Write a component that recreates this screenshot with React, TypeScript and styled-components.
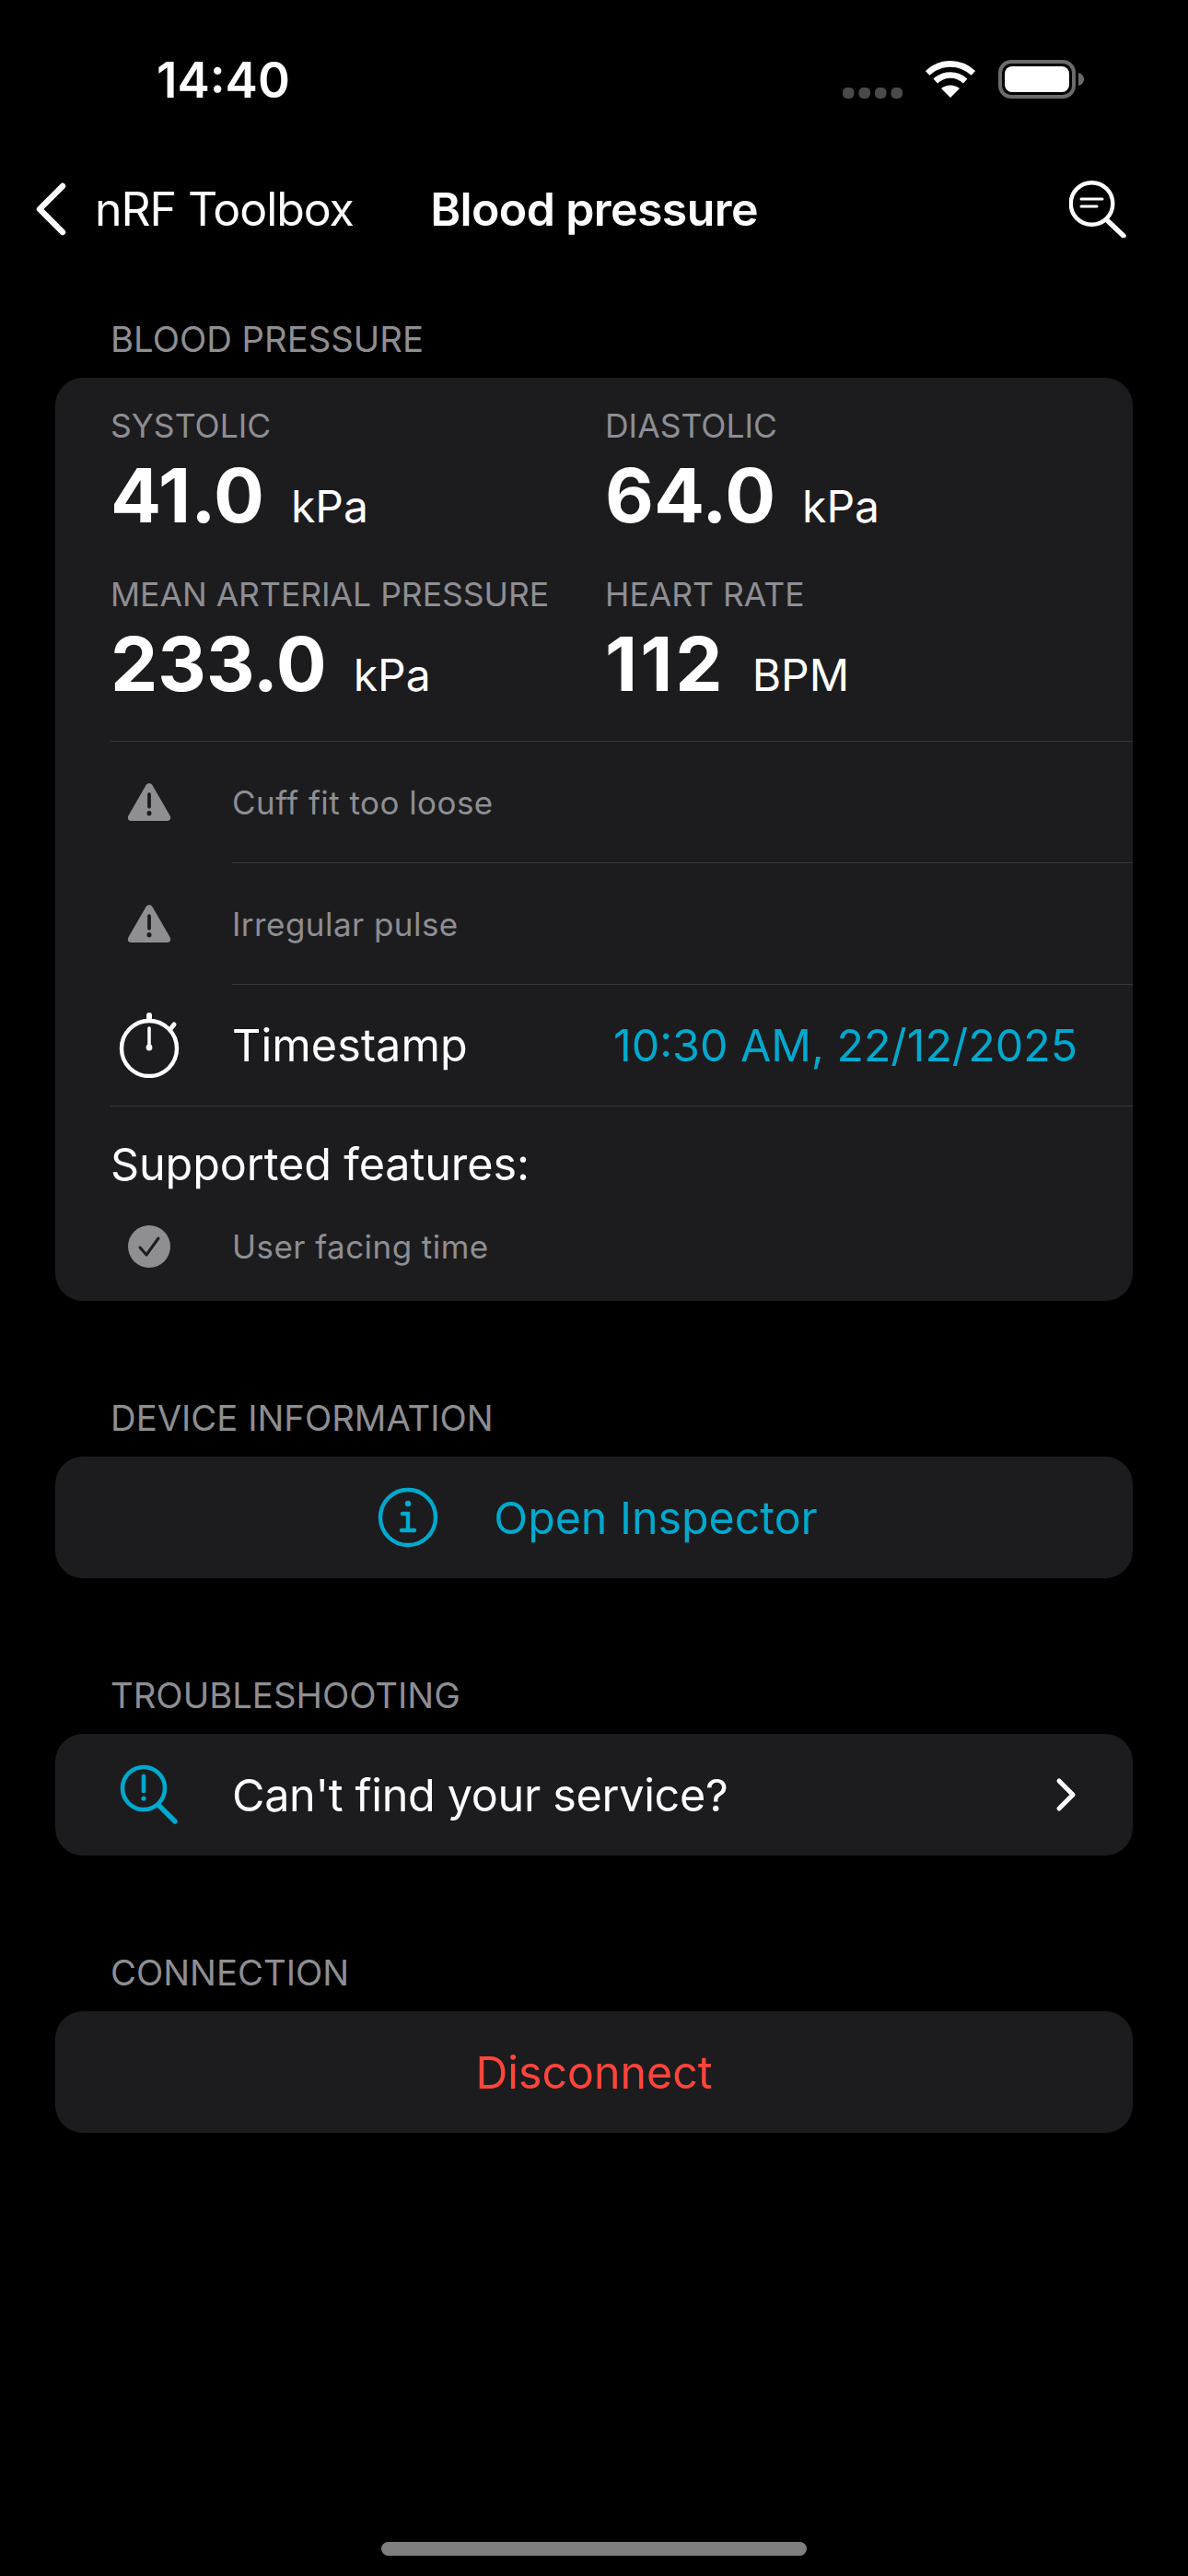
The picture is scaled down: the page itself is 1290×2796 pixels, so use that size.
import styled, { createGlobalStyle } from 'styled-components';

const blue = '#00a9ce';
const grey = '#8e8e93';
const fontStack = 'Inter, "Liberation Sans", sans-serif';

const Global = createGlobalStyle`
  html, body {
    margin: 0;
    background: #000;
  }
  * {
    box-sizing: border-box;
  }
`;

const Screen = styled.div`
  width: 1290px;
  height: 2796px;
  background: #000;
  color: #fff;
  font-family: ${fontStack};
  display: flex;
  flex-direction: column;
  overflow: hidden;
`;

const StatusBar = styled.div`
  height: 174px;
  padding: 0 113px 0 170px;
  display: flex;
  align-items: flex-start;
  justify-content: space-between;
`;

const Clock = styled.span`
  font-size: 53px;
  font-weight: 600;
  line-height: 60px;
  margin-top: 57px;
`;

const StatusIcons = styled.div`
  display: flex;
  align-items: center;
  gap: 23px;
  margin-top: 65px;
`;

const NavBar = styled.div`
  height: 106px;
  display: grid;
  grid-template-columns: 1fr auto 1fr;
  align-items: center;
`;

const BackLink = styled.div`
  display: flex;
  align-items: center;
  gap: 30px;
  padding-left: 37px;
  font-size: 50px;
  letter-spacing: -1.07px;
`;

const NavTitle = styled.div`
  font-size: 50px;
  font-weight: 600;
  letter-spacing: -0.6px;
`;

const NavAction = styled.div`
  display: flex;
  justify-content: flex-end;
  padding-right: 67px;
`;

const Content = styled.div`
  padding: 64px 60px 0;
  display: flex;
  flex-direction: column;
  gap: 103px;
`;

const SectionLabel = styled.div`
  padding-left: 60px;
  font-size: 38.3px;
  line-height: 48px;
  color: ${grey};
  margin-bottom: 18px;
`;

const Card = styled.div`
  background: #1c1c1e;
  border-radius: 30px;
  display: flow-root;
`;

const Metrics = styled.div`
  display: grid;
  grid-template-columns: 537px 1fr;
  row-gap: 27px;
  padding: 30px 0 25px 60px;
`;

const MetricLabel = styled.div`
  font-size: 35.5px;
  line-height: 46px;
  color: ${grey};
  white-space: nowrap;
`;

const MetricValue = styled.div`
  display: flex;
  align-items: baseline;
  line-height: 92px;
  margin-top: 6px;
  white-space: nowrap;
`;

const Reading = styled.span<{ $spread?: boolean }>`
  font-size: 81.5px;
  font-weight: 700;
  letter-spacing: ${(p) => (p.$spread ? 3 : 0)}px;
`;

const Unit = styled.span`
  font-size: 48px;
  margin-left: 29px;
`;

const Divider = styled.div<{ $inset?: boolean }>`
  height: 1px;
  margin-left: ${(p) => (p.$inset ? 192 : 60)}px;
  background: #38383a;
`;

const IconSlot = styled.div`
  width: 132px;
  flex: none;
  display: flex;
  justify-content: center;
  padding-right: 48px;
`;

const FlatRow = styled.div`
  height: 131px;
  padding-left: 60px;
  display: flex;
  align-items: center;
`;

const MutedText = styled.span`
  font-size: 35px;
  letter-spacing: 0.45px;
  color: ${grey};
`;

const BodyText = styled.span`
  font-size: 48.5px;
  letter-spacing: -0.3px;
`;

const RowTitle = styled(BodyText)`
  letter-spacing: 0.1px;
`;

const TimeValue = styled.span`
  margin-left: auto;
  padding-right: 60px;
  font-size: 48.3px;
  color: ${blue};
`;

const Heading = styled.div`
  padding: 33px 0 0 60px;
  font-size: 48.5px;
  letter-spacing: -0.1px;
  line-height: 60px;
`;

const FeatureRow = styled.div`
  height: 75px;
  margin: 21px 0 22px;
  padding-left: 60px;
  display: flex;
  align-items: center;
`;

const ActionCard = styled(Card)<{ $center?: boolean }>`
  height: 132px;
  display: flex;
  align-items: center;
  justify-content: ${(p) => (p.$center ? 'center' : 'flex-start')};
  padding: ${(p) => (p.$center ? '0' : '0 60px')};
  font-size: 48.3px;
`;

const InspectorCard = styled(ActionCard)`
  padding-left: 8px;
`;

const InspectorLink = styled.span`
  color: ${blue};
  margin-left: 60px;
`;

const DangerText = styled.span`
  color: #ff453a;
`;

const Chevron = styled.svg`
  margin-left: auto;
`;

const HomeBar = styled.div`
  width: 462px;
  height: 15px;
  border-radius: 8px;
  background: #7f7f7f;
  margin: auto auto 22px;
`;

function Wifi() {
  return (
    <svg width="58" height="42" viewBox="0 0 58 44" fill="none">
      <path d="M3 15 C18 1 40 1 55 15" stroke="#fff" strokeWidth="7" />
      <path d="M12 24 C22 15 36 15 46 24" stroke="#fff" strokeWidth="7" />
      <path d="M29 43 L18.5 32.5 C24.5 27.5 33.5 27.5 39.5 32.5 Z" fill="#fff" />
    </svg>
  );
}

function Battery() {
  return (
    <svg width="93" height="42" viewBox="0 0 93 42" fill="none">
      <rect x="2" y="2" width="80" height="38" rx="12" stroke="#6b6b6b" strokeWidth="4" />
      <rect x="7" y="7" width="70" height="28" rx="8" fill="#fff" />
      <path d="M87 14 C91 15 93 18 93 21 C93 24 91 27 87 28 Z" fill="#6b6b6b" />
    </svg>
  );
}

function CellDots() {
  return (
    <svg width="65" height="12" viewBox="0 0 65 12" style={{ marginTop: 30 }}>
      {[0, 17.5, 35, 52.5].map((x) => (
        <rect key={x} x={x} y="0" width="12.5" height="12" rx="5" fill="#4a4a4c" />
      ))}
    </svg>
  );
}

function Warning() {
  return (
    <svg width="48" height="43" viewBox="0 0 50 42" preserveAspectRatio="none">
      <path
        d="M21.5 3 C23 0.5 27 0.5 28.5 3 L48.5 35.5 C50.2 38.5 48.5 41 45 41 L5 41 C1.5 41 -0.2 38.5 1.5 35.5 Z"
        fill={grey}
      />
      <path d="M25 13 V26" stroke="#1c1c1e" strokeWidth="4" strokeLinecap="round" />
      <circle cx="25" cy="33" r="2.6" fill="#1c1c1e" />
    </svg>
  );
}

function Stopwatch() {
  return (
    <svg width="66" height="71" viewBox="0 0 66 71" fill="none" stroke="#fff" strokeWidth="4.4" strokeLinecap="round">
      <circle cx="33" cy="39" r="30" />
      <path d="M33 3 V7" strokeWidth="6" />
      <path d="M56 18 L60 13" strokeWidth="5" />
      <path d="M33 17 V38" strokeWidth="3.6" />
      <circle cx="33" cy="38" r="3.4" fill="#fff" stroke="none" />
    </svg>
  );
}

function CheckBadge() {
  return (
    <svg width="46" height="46" viewBox="0 0 46 46" fill="none">
      <circle cx="23" cy="23" r="23" fill={grey} />
      <path d="M13 24 L20 32 L33 14" stroke="#1c1c1e" strokeWidth="3" strokeLinecap="round" strokeLinejoin="round" />
    </svg>
  );
}

function InfoCircle() {
  return (
    <svg width="66" height="66" viewBox="0 0 66 66" fill="none" stroke={blue} strokeWidth="4.4" strokeLinecap="round">
      <circle cx="33" cy="33" r="30" />
      <circle cx="33" cy="18" r="3.2" fill={blue} stroke="none" />
      <path d="M27 29 H33 V47 M26 47 H40" />
    </svg>
  );
}

function SearchAlert() {
  return (
    <svg width="64" height="66" viewBox="0 0 64 66" fill="none" stroke={blue} strokeWidth="4.6" strokeLinecap="round">
      <circle cx="26" cy="26" r="23" />
      <path d="M42 44 L60 62" strokeWidth="5.4" />
      <path d="M26 13 V29" />
      <circle cx="26" cy="37" r="2.6" fill={blue} stroke="none" />
    </svg>
  );
}

function SearchLines() {
  return (
    <svg width="62" height="62" viewBox="0 0 62 62" fill="none" stroke="#fff" strokeWidth="4.4" strokeLinecap="round">
      <circle cx="24.5" cy="25" r="22.8" />
      <path d="M41 43 L59 60" strokeWidth="5.4" />
      <path d="M13 20 H36" strokeWidth="3" />
      <path d="M13 28 H30" strokeWidth="3" />
    </svg>
  );
}

export default function App() {
  return (
    <Screen>
      <Global />
      <StatusBar>
        <Clock>14:40</Clock>
        <StatusIcons>
          <CellDots />
          <Wifi />
          <Battery />
        </StatusIcons>
      </StatusBar>
      <NavBar>
        <BackLink>
          <svg width="36" height="58" viewBox="0 0 36 58" fill="none">
            <path d="M31 4 L6 29 L31 54" stroke="#fff" strokeWidth="6.4" strokeLinecap="round" strokeLinejoin="round" />
          </svg>
          nRF Toolbox
        </BackLink>
        <NavTitle>Blood pressure</NavTitle>
        <NavAction>
          <SearchLines />
        </NavAction>
      </NavBar>
      <Content>
        <section>
          <SectionLabel>BLOOD PRESSURE</SectionLabel>
          <Card>
            <Metrics>
              <div>
                <MetricLabel>SYSTOLIC</MetricLabel>
                <MetricValue>
                  <Reading>41.0</Reading>
                  <Unit>kPa</Unit>
                </MetricValue>
              </div>
              <div>
                <MetricLabel>DIASTOLIC</MetricLabel>
                <MetricValue>
                  <Reading>64.0</Reading>
                  <Unit>kPa</Unit>
                </MetricValue>
              </div>
              <div>
                <MetricLabel>MEAN ARTERIAL PRESSURE</MetricLabel>
                <MetricValue>
                  <Reading>233.0</Reading>
                  <Unit>kPa</Unit>
                </MetricValue>
              </div>
              <div>
                <MetricLabel>HEART RATE</MetricLabel>
                <MetricValue>
                  <Reading $spread>112</Reading>
                  <Unit>BPM</Unit>
                </MetricValue>
              </div>
            </Metrics>
            <Divider />
            <FlatRow>
              <IconSlot>
                <Warning />
              </IconSlot>
              <MutedText>Cuff fit too loose</MutedText>
            </FlatRow>
            <Divider $inset />
            <FlatRow>
              <IconSlot>
                <Warning />
              </IconSlot>
              <MutedText>Irregular pulse</MutedText>
            </FlatRow>
            <Divider $inset />
            <FlatRow>
              <IconSlot>
                <Stopwatch />
              </IconSlot>
              <RowTitle>Timestamp</RowTitle>
              <TimeValue>10:30 AM, 22/12/2025</TimeValue>
            </FlatRow>
            <Divider />
            <Heading>Supported features:</Heading>
            <FeatureRow>
              <IconSlot>
                <CheckBadge />
              </IconSlot>
              <MutedText>User facing time</MutedText>
            </FeatureRow>
          </Card>
        </section>
        <section>
          <SectionLabel>DEVICE INFORMATION</SectionLabel>
          <InspectorCard $center>
            <InfoCircle />
            <InspectorLink>Open Inspector</InspectorLink>
          </InspectorCard>
        </section>
        <section>
          <SectionLabel>TROUBLESHOOTING</SectionLabel>
          <ActionCard>
            <IconSlot>
              <SearchAlert />
            </IconSlot>
            <BodyText>Can't find your service?</BodyText>
            <Chevron width="24" height="38" viewBox="0 0 24 38" fill="none">
              <path d="M4 4 L19 19 L4 34" stroke="#fff" strokeWidth="5" strokeLinecap="round" strokeLinejoin="round" />
            </Chevron>
          </ActionCard>
        </section>
        <section>
          <SectionLabel>CONNECTION</SectionLabel>
          <ActionCard $center>
            <DangerText>Disconnect</DangerText>
          </ActionCard>
        </section>
      </Content>
      <HomeBar />
    </Screen>
  );
}
